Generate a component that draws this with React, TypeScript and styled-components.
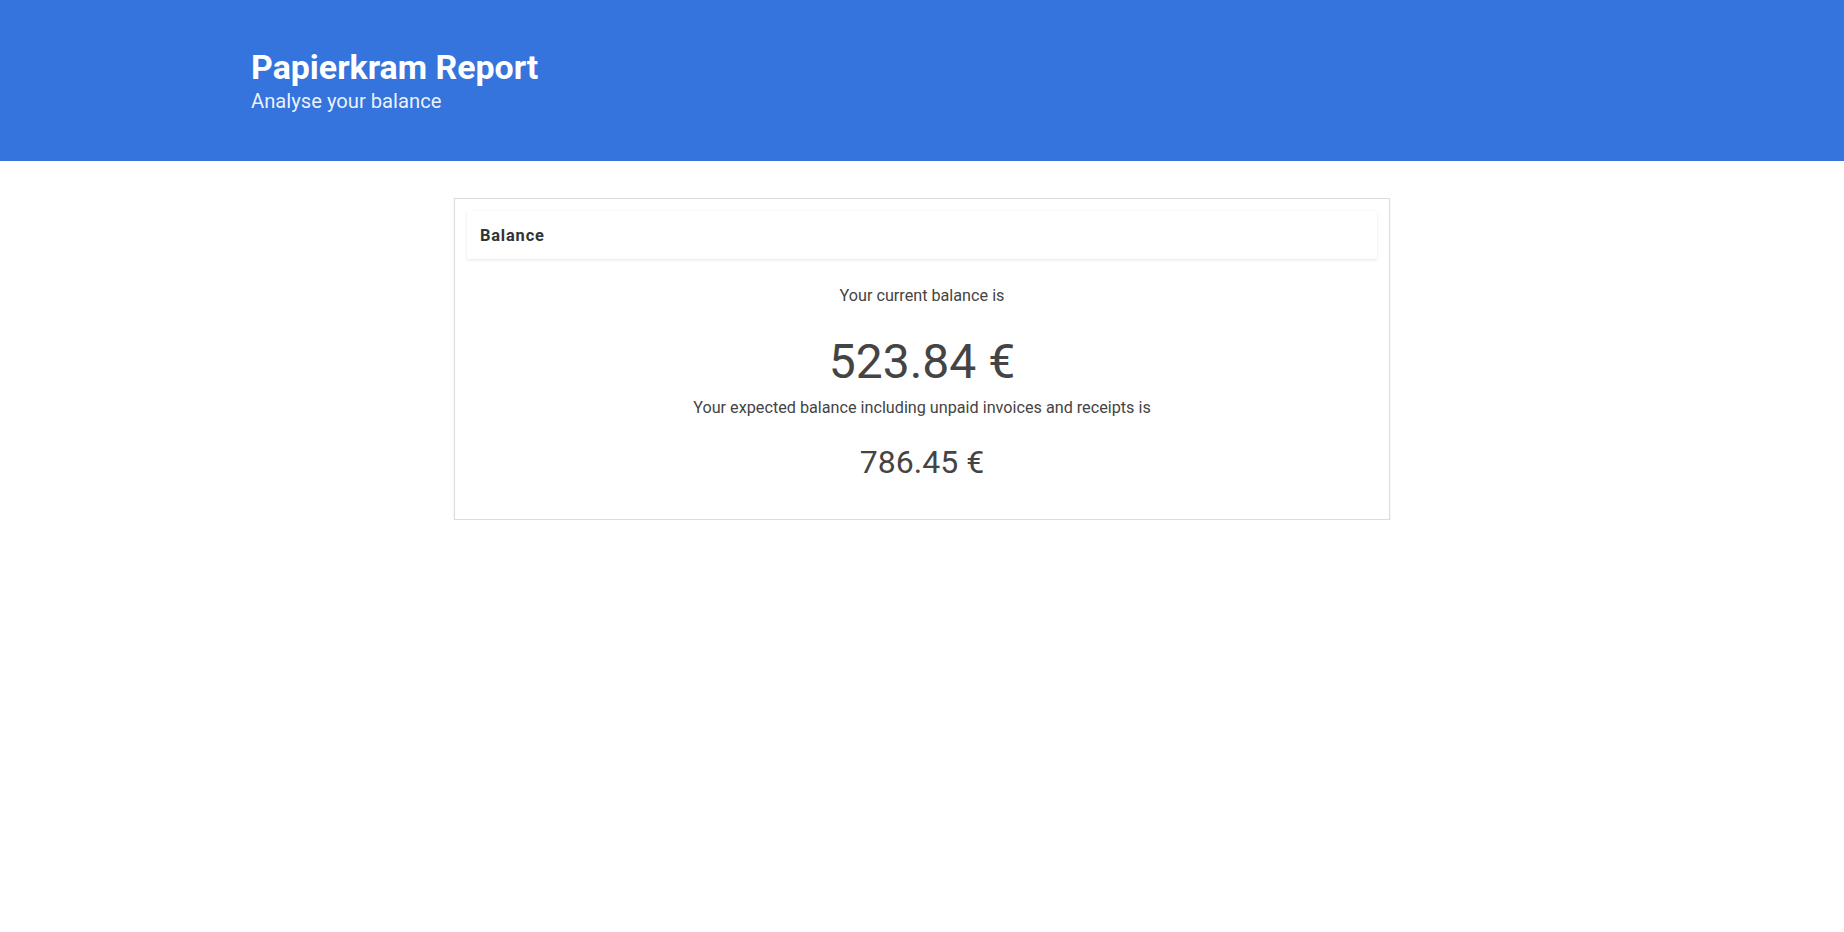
import React from "react";
import styled, { createGlobalStyle } from "styled-components";

const Global = createGlobalStyle`
  html, body { margin: 0; padding: 0; background: #fff; }
  body { font-family: Roboto, "Noto Sans", Arial, sans-serif; color: #444; }
`;

const Header = styled.header`
  background: #3474dc;
  height: 161px;
  box-sizing: border-box;
  padding: 47px 0 0 251px;
  color: #fff;
`;

const Title = styled.h1`
  margin: 0;
  font-size: 33.9px;
  font-weight: 700;
  line-height: 42px;
`;

const Subtitle = styled.div`
  font-size: 20.2px;
  line-height: 24px;
  color: rgba(255, 255, 255, 0.92);
`;

const Main = styled.main`
  display: flex;
  justify-content: center;
  padding-top: 37px;
`;

const Card = styled.section`
  width: 936px;
  box-sizing: border-box;
  border: 1px solid #dcdcdc;
  box-shadow: 0 1px 2px rgba(0, 0, 0, 0.08);
  padding: 12px 12px 38px;
`;

const CardHeader = styled.div`
  height: 48px;
  display: flex;
  align-items: center;
  padding: 0 13px;
  box-shadow: 0 1px 3px rgba(0, 0, 0, 0.1);
  font-weight: 700;
  font-size: 16.4px;
  letter-spacing: 0.05em;
  color: #333;
`;

const Body = styled.div`
  display: flex;
  flex-direction: column;
  align-items: center;
  text-align: center;
  padding-top: 27px;
`;

const Label = styled.div<{ $mt?: number }>`
  font-size: 16.2px;
  line-height: 20px;
  margin-top: ${(p) => p.$mt ?? 0}px;
`;

const Amount = styled.div<{ $size: number; $mt: number }>`
  font-size: ${(p) => p.$size}px;
  line-height: 1.2;
  margin-top: ${(p) => p.$mt}px;
`;

export default function App() {
  return (
    <>
      <Global />
      <Header>
        <Title>Papierkram Report</Title>
        <Subtitle>Analyse your balance</Subtitle>
      </Header>
      <Main>
        <Card>
          <CardHeader>Balance</CardHeader>
          <Body>
            <Label>Your current balance is</Label>
            <Amount $size={48} $mt={27}>523.84 €</Amount>
            <Label $mt={7}>Your expected balance including unpaid invoices and receipts is</Label>
            <Amount $size={32} $mt={25}>786.45 €</Amount>
          </Body>
        </Card>
      </Main>
    </>
  );
}
